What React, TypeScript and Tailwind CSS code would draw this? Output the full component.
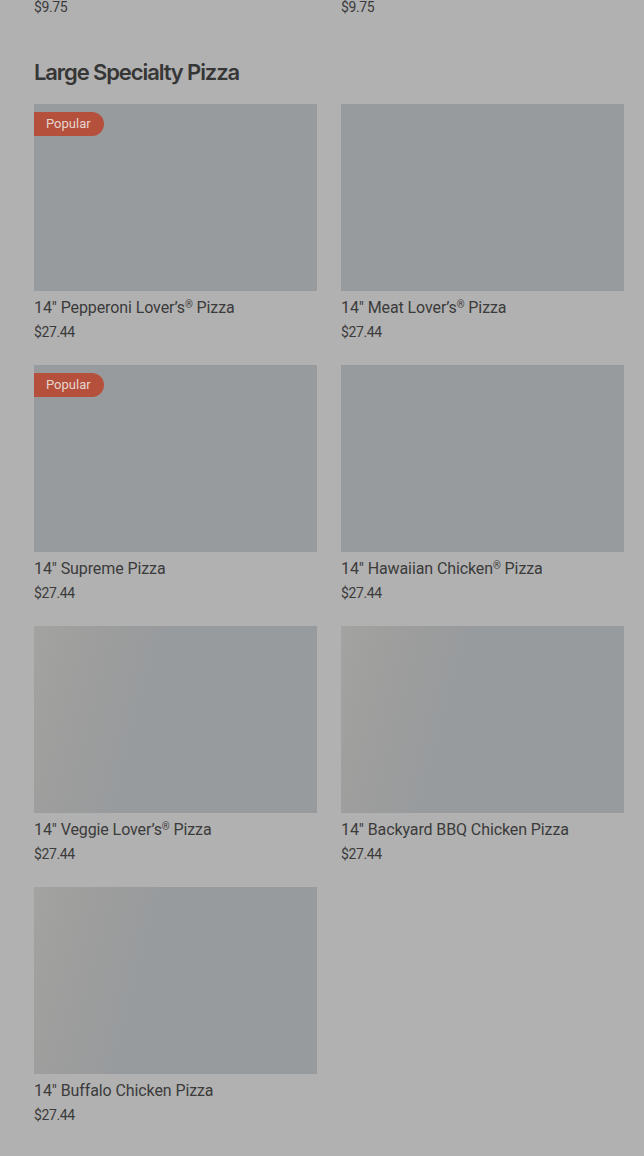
import React from "react";

type Item = { name: string; reg?: boolean; after?: string; price: string; popular?: boolean; shimmer?: boolean };

const items: Item[] = [
  { name: "14\" Pepperoni Lover’s", reg: true, after: " Pizza", price: "$27.44", popular: true },
  { name: "14\" Meat Lover’s", reg: true, after: " Pizza", price: "$27.44" },
  { name: "14\" Supreme Pizza", price: "$27.44", popular: true },
  { name: "14\" Hawaiian Chicken", reg: true, after: " Pizza", price: "$27.44" },
  { name: "14\" Veggie Lover’s", reg: true, after: " Pizza", price: "$27.44", shimmer: true },
  { name: "14\" Backyard BBQ Chicken Pizza", price: "$27.44", shimmer: true },
  { name: "14\" Buffalo Chicken Pizza", price: "$27.44", shimmer: true },
];

function Card({ item }: { item: Item }) {
  return (
    <div className="flex flex-col">
      <div
        className={
          "relative h-[187px] w-full " +
          (item.shimmer
            ? "bg-[linear-gradient(105deg,#a3a3a1_0%,#9c9d9c_22%,#989b9e_40%,#989b9e_100%)]"
            : "bg-[#989b9e]")
        }
      >
        {item.popular && (
          <div className="absolute left-0 top-[8px] flex h-[24px] w-[70px] items-center rounded-r-full bg-[#b4503b] pl-[12px] text-[13px] text-[#e6d6d2] [font-family:Roboto,sans-serif]">
            Popular
          </div>
        )}
      </div>
      <div className="mt-[5px] h-[24px] overflow-visible whitespace-nowrap text-[16px] leading-[24px] tracking-[-0.1px] text-[#3b3b3b] [font-family:Roboto,sans-serif]">
        {item.name}
        {item.reg && <span className="relative -top-[5px] text-[10px] leading-none">®</span>}
        {item.after}
      </div>
      <div className="mt-[2px] text-[14px] leading-[20px] tracking-[-0.4px] text-[#3b3b3b] [font-family:Roboto,sans-serif]">
        {item.price}
      </div>
    </div>
  );
}

export default function App() {
  return (
    <div className="min-h-[1156px] w-[644px] overflow-hidden bg-[#b1b1b1] pl-[34px] pr-[20px]">
      <div className="-mt-[3px] grid grid-cols-2 gap-x-[24px] text-[14px] leading-[20px] tracking-[-0.4px] text-[#3b3b3b] [font-family:Roboto,sans-serif]">
        <div>$9.75</div>
        <div>$9.75</div>
      </div>
      <h2 className="mt-[41px] text-[22px] font-semibold leading-[28px] tracking-[-0.05em] text-[#363636] [font-family:Inter,sans-serif]">
        Large Specialty Pizza
      </h2>
      <div className="mt-[18px] grid grid-cols-2 gap-x-[24px] gap-y-[23px] pb-[30px]">
        {items.map((it) => (
          <Card key={it.name} item={it} />
        ))}
      </div>
    </div>
  );
}
